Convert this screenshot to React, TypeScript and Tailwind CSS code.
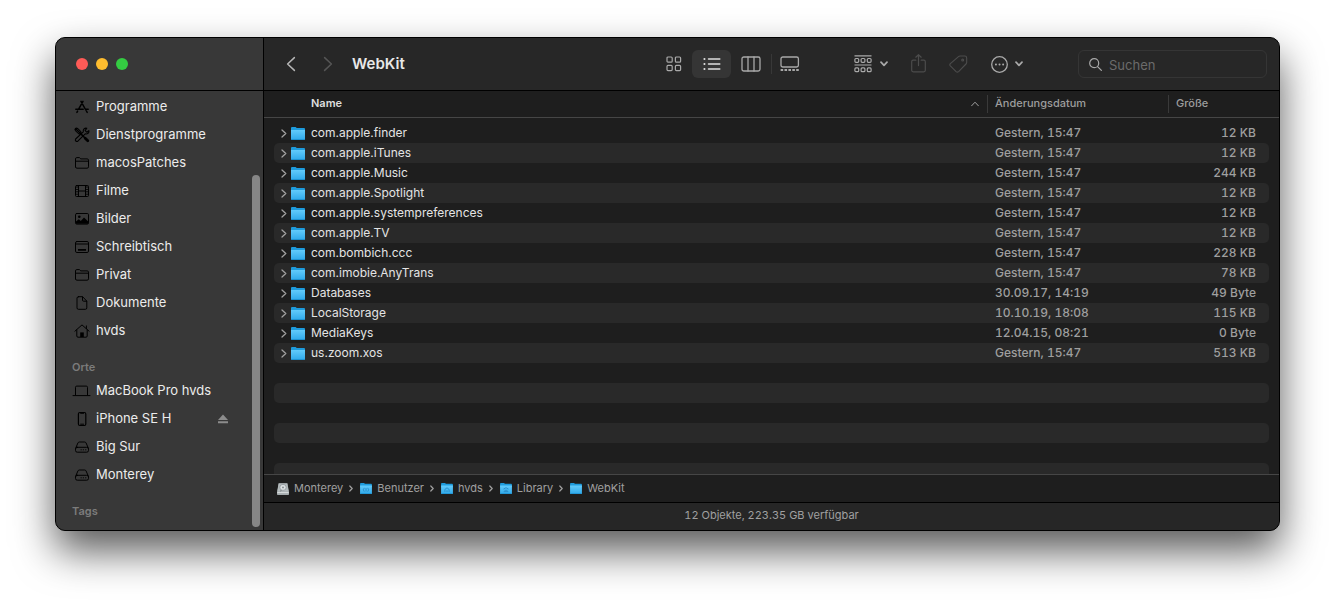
import type { ReactNode } from "react";
import clsx from "clsx";

type IconProps = { className?: string };

type SidebarItem = {
  label: string;
  icon: (props: IconProps) => ReactNode;
  ejectable?: boolean;
};

type FileRow = {
  name: string;
  date: string;
  size: string;
};

/* ---------- sidebar icons ---------- */

const line = {
  fill: "none",
  stroke: "currentColor",
  strokeLinecap: "round",
  strokeLinejoin: "round",
} as const;

const AppsIcon = ({ className }: IconProps) => (
  <svg viewBox="0 0 16 16" className={className} {...line} strokeWidth="1.5">
    <path d="M7 2.3 11.8 11M9 2.3 4.6 10.2M1.8 10.2h7.4M11.4 10.2h2.8M3.6 12.1l-.7 1.3M12.4 12l.8 1.4" />
  </svg>
);

const ToolsIcon = ({ className }: IconProps) => (
  <svg viewBox="0 0 16 16" className={className} {...line}>
    <path d="M14.9 3.6 12.8 5.2l-1.7-1.6L12.8 1.2C10.6.6 8.8 2.6 9.3 4.8L1.6 12c-1 1.4.9 3.2 2.2 2.2L11.2 6.8c2.2.6 4.3-1 3.7-3.2Z" strokeWidth="1.1" />
    <path d="M2.5 2.5 5.7 5.7" strokeWidth="4" />
    <path d="m3.4 2.2 2.9 2.9M2.2 3.4l2.9 2.9" stroke="#383838" strokeWidth="0.6" />
    <path d="m6.4 6.4 4.8 4.8" strokeWidth="1.6" />
    <path d="m11.2 11.2 2.6 2.6" strokeWidth="2.8" />
  </svg>
);

const FolderIcon = ({ className }: IconProps) => (
  <svg viewBox="0 0 16 16" className={className} {...line}>
    <path d="M1.5 11.8V3.9q0-1.3 1.3-1.3h2.6l1.4 1.3h6.4q1.3 0 1.3 1.3v6.6q0 1.4-1.4 1.4H2.9q-1.4 0-1.4-1.4ZM1.5 6.2h13" />
  </svg>
);

const FilmIcon = ({ className }: IconProps) => (
  <svg viewBox="0 0 16 16" className={className} {...line}>
    <rect x="1.5" y="2.5" width="13" height="11" rx="1" />
    <path d="M4.5 2.5v11M11.5 2.5v11M4.5 8h7" />
    <path d="M3 3.5v9M13 3.5v9" strokeWidth="1.6" strokeDasharray="1 1.4" strokeLinecap="butt" />
  </svg>
);

const PictureIcon = ({ className }: IconProps) => (
  <svg viewBox="0 0 16 16" className={className} {...line}>
    <rect x="1.5" y="2.5" width="13" height="10.6" rx="1.2" />
    <circle cx="5.3" cy="5.8" r="1.3" fill="currentColor" stroke="none" />
    <path d="M2 12.8V10.6L4.8 8.3l2 1.6L10 6.6l4.2 3.8v2.4Z" fill="currentColor" stroke="none" />
  </svg>
);

const DesktopIcon = ({ className }: IconProps) => (
  <svg viewBox="0 0 16 16" className={className} {...line}>
    <rect x="1.5" y="2.5" width="13" height="11" rx="1.4" />
    <path d="M2 5h12" />
    <path d="M4 10h8v1.8H4Z" fill="currentColor" stroke="none" />
  </svg>
);

const DocumentIcon = ({ className }: IconProps) => (
  <svg viewBox="0 0 16 16" className={className} {...line}>
    <path d="M4.4 1.7h4.2l4.2 4.4v6.8q0 1.4-1.4 1.4h-7q-1.4 0-1.4-1.4V3.1q0-1.4 1.4-1.4ZM8.5 1.9v3.2q0 1.1 1.1 1.1h3" />
  </svg>
);

const HomeIcon = ({ className }: IconProps) => (
  <svg viewBox="0 0 16 16" className={className} {...line}>
    <path d="M.9 8.2 8 1.9l7.1 6.3M12.4 5.6V2.9M2.8 7v6q0 1.2 1.2 1.2h8q1.2 0 1.2-1.2V7" />
    <path d="M6.2 14V9.4h3.6V14Z" fill="currentColor" stroke="none" />
  </svg>
);

const LaptopIcon = ({ className }: IconProps) => (
  <svg viewBox="0 0 16 16" className={className} {...line}>
    <path d="M1.5 12V4.3q0-1.2 1.2-1.2h9.6q1.2 0 1.2 1.2V12M-1 12.6h17" />
  </svg>
);

const PhoneIcon = ({ className }: IconProps) => (
  <svg viewBox="0 0 16 16" className={className} {...line}>
    <rect x="4.4" y="1.5" width="7.4" height="13" rx="1.5" strokeWidth="1.2" />
    <path d="M6.6 2.3h3M6.6 13.2h3" />
  </svg>
);

const DriveIcon = ({ className }: IconProps) => (
  <svg viewBox="0 0 16 16" className={className} {...line}>
    <path d="M1.6 9.3 3.9 4Q4.3 3 5.4 3h5.2q1.1 0 1.5 1l2.3 5.3" />
    <rect x="1.5" y="8.3" width="13" height="4.9" rx="1.8" />
    <path d="M7 10.8h.3M9.2 10.8h.3M11.6 10.8h.3" />
  </svg>
);

const favorites: SidebarItem[] = [
  { label: "Programme", icon: AppsIcon },
  { label: "Dienstprogramme", icon: ToolsIcon },
  { label: "macosPatches", icon: FolderIcon },
  { label: "Filme", icon: FilmIcon },
  { label: "Bilder", icon: PictureIcon },
  { label: "Schreibtisch", icon: DesktopIcon },
  { label: "Privat", icon: FolderIcon },
  { label: "Dokumente", icon: DocumentIcon },
  { label: "hvds", icon: HomeIcon },
];

const locations: SidebarItem[] = [
  { label: "MacBook Pro hvds", icon: LaptopIcon },
  { label: "iPhone SE H", icon: PhoneIcon, ejectable: true },
  { label: "Big Sur", icon: DriveIcon },
  { label: "Monterey", icon: DriveIcon },
];

const files: FileRow[] = [
  { name: "com.apple.finder", date: "Gestern, 15:47", size: "12 KB" },
  { name: "com.apple.iTunes", date: "Gestern, 15:47", size: "12 KB" },
  { name: "com.apple.Music", date: "Gestern, 15:47", size: "244 KB" },
  { name: "com.apple.Spotlight", date: "Gestern, 15:47", size: "12 KB" },
  { name: "com.apple.systempreferences", date: "Gestern, 15:47", size: "12 KB" },
  { name: "com.apple.TV", date: "Gestern, 15:47", size: "12 KB" },
  { name: "com.bombich.ccc", date: "Gestern, 15:47", size: "228 KB" },
  { name: "com.imobie.AnyTrans", date: "Gestern, 15:47", size: "78 KB" },
  { name: "Databases", date: "30.09.17, 14:19", size: "49 Byte" },
  { name: "LocalStorage", date: "10.10.19, 18:08", size: "115 KB" },
  { name: "MediaKeys", date: "12.04.15, 08:21", size: "0 Byte" },
  { name: "us.zoom.xos", date: "Gestern, 15:47", size: "513 KB" },
];

// empty striped rows below the files
const fillerRows = [0, 1, 2, 3, 4, 5];

const path = [
  { label: "Monterey", kind: "drive" },
  { label: "Benutzer", kind: "users" },
  { label: "hvds", kind: "home" },
  { label: "Library", kind: "library" },
  { label: "WebKit", kind: "folder" },
];

/* ---------- small drawings ---------- */

const BlueFolder = ({ kind = "folder", className }: { kind?: string; className?: string }) => (
  <svg viewBox="0 0 14 13" className={className}>
    <defs>
      <linearGradient id="folder-front" x1="0" y1="0" x2="0" y2="1">
        <stop offset="0" stopColor="#62cbfb" />
        <stop offset="1" stopColor="#2fa9ea" />
      </linearGradient>
    </defs>
    <path d="M0 1Q0 0 1 0h3.6l1.2 1H13q1 0 1 1v3H0Z" fill="#1e9bdc" />
    <path d="M0 3h14v9q0 1-1 1H1q-1 0-1-1Z" fill="url(#folder-front)" />
    <path d="M.5 12.5h13" stroke="#1f93d3" />
    {kind === "users" && (
      <path d="M5 5.8a3 3 0 0 0 0 4.4M9 5.8a3 3 0 0 1 0 4.4M7 6v4" stroke="#2787c4" fill="none" />
    )}
    {kind === "home" && <path d="M4.5 10.5V7.6L7 5.7l2.5 1.9v2.9M7 8.6v2" stroke="#2787c4" fill="none" />}
    {kind === "library" && <path d="M4 7.2 7 5.6l3 1.6M4.3 10.2h5.4M5.2 8.6h3.6" stroke="#2787c4" fill="none" />}
  </svg>
);

const SilverDrive = ({ className }: IconProps) => (
  <svg viewBox="0 0 12 12" className={className}>
    <path d="M1.6.2h8.8L12 9v2.2q0 .8-.8.8H.8q-.8 0-.8-.8V9Z" fill="#a4abad" />
    <path d="M1.8.5h8.4l1.4 8H.4Z" fill="#b4bbbd" />
    <ellipse cx="6" cy="4.4" rx="3.2" ry="3" fill="#dde2e3" stroke="#858d90" strokeWidth=".7" />
    <circle cx="6" cy="4.4" r=".9" fill="#7d8588" />
    <path d="m4.6 7.4-1.6.8" stroke="#6c7477" strokeWidth=".8" />
    <path d="M.3 9.6h11.4" stroke="#e8ebec" strokeWidth=".8" />
  </svg>
);

const DownChevron = () => (
  <svg viewBox="0 0 8 6" className="h-[6px] w-2" {...line} strokeWidth="1.7">
    <path d="M1 1.2 4 4.4 7 1.2" />
  </svg>
);

/* ---------- sidebar ---------- */

const SidebarList = ({ items }: { items: SidebarItem[] }) => (
  <ul>
    {items.map(({ label, icon: Icon, ejectable }) => (
      <li key={label} className="flex h-7 items-center pr-[35px] pl-[18px]">
        <a href="#" className="flex flex-1 items-center gap-[6px] whitespace-nowrap">
          <Icon className="size-4 shrink-0 overflow-visible text-black" />
          {label}
        </a>
        {ejectable && (
          <button type="button" aria-label="Auswerfen" className="text-[#8c8c8c]">
            <svg viewBox="0 0 10 10" className="size-[10px]" fill="currentColor">
              <path d="M5 0.4 10 6H0ZM0 7.2h10v2H0Z" />
            </svg>
          </button>
        )}
      </li>
    ))}
  </ul>
);

const SidebarHeading = ({ children }: { children: ReactNode }) => (
  <h2 className="mt-[13px] pl-4 text-[11px] leading-[19px] font-semibold text-[#7c7c7c]">{children}</h2>
);

const Sidebar = () => (
  <aside className="flex w-[208px] shrink-0 flex-col border-r border-black bg-[#383838]">
    <div className="flex h-[53px] shrink-0 items-center gap-2 border-b border-black pl-5">
      <button type="button" aria-label="Schließen" className="size-3 rounded-full bg-[#ff5b57]" />
      <button type="button" aria-label="Minimieren" className="size-3 rounded-full bg-[#ffbd2f]" />
      <button type="button" aria-label="Vergrößern" className="size-3 rounded-full bg-[#34cc42]" />
    </div>
    <nav className="relative min-h-0 flex-1 overflow-hidden pt-[2px] text-[13px] text-[#ececec]">
      <SidebarList items={favorites} />
      <SidebarHeading>Orte</SidebarHeading>
      <SidebarList items={locations} />
      <SidebarHeading>Tags</SidebarHeading>
      <div className="absolute top-[84px] right-[3px] bottom-[3px] w-2 rounded-full bg-[#868686]" />
    </nav>
  </aside>
);

/* ---------- toolbar ---------- */

const Toolbar = () => (
  <header className="flex h-[53px] shrink-0 items-center border-b border-black bg-[#272727] pr-3 pl-[22px] text-[#a9a9a9]">
    <div className="flex items-center gap-[27px]">
      <button type="button" aria-label="Zurück" className="text-[#b5b5b5]">
        <svg viewBox="0 0 10 16" className="h-4 w-[10px]" {...line} strokeWidth="1.5">
          <path d="M8.4 1.6 1.6 8l6.8 6.4" />
        </svg>
      </button>
      <button type="button" aria-label="Vorwärts" className="text-[#555555]">
        <svg viewBox="0 0 10 16" className="h-4 w-[10px]" {...line} strokeWidth="1.5">
          <path d="M1.6 1.6 8.4 8l-6.8 6.4" />
        </svg>
      </button>
    </div>
    <h1 className="ml-[19px] text-[15px] font-semibold text-[#e8e8e8]">WebKit</h1>

    <div className="ml-auto flex items-center">
      <button type="button" aria-label="Symbole" className="flex h-7 w-9 items-center justify-center">
        <svg viewBox="0 0 16 16" className="size-4" {...line} strokeWidth="1.2">
          <rect x="1" y="1" width="5.2" height="5.2" rx="1" />
          <rect x="9.4" y="1" width="5.2" height="5.2" rx="1" />
          <rect x="1" y="9.4" width="5.2" height="5.2" rx="1" />
          <rect x="9.4" y="9.4" width="5.2" height="5.2" rx="1" />
        </svg>
      </button>
      <button
        type="button"
        aria-label="Liste"
        aria-pressed="true"
        className="flex h-7 w-[39px] items-center justify-center rounded-md bg-[#353535] text-[#dedede]"
      >
        <svg viewBox="0 0 18 14" className="h-[14px] w-[18px]" {...line} strokeWidth="1.5">
          <path d="M5.5 2h11.3M5.5 7h11.3M5.5 12h11.3" />
          <path d="M1.4 2h.1M1.4 7h.1M1.4 12h.1" strokeWidth="2" />
        </svg>
      </button>
      <button type="button" aria-label="Spalten" className="flex h-7 w-10 items-center justify-center">
        <svg viewBox="0 0 20 16" className="h-4 w-5" {...line} strokeWidth="1.3">
          <rect x="1" y="1" width="18" height="14" rx="1.8" />
          <path d="M7 1v14M13 1v14" />
        </svg>
      </button>
      <div className="h-5 w-px bg-[#383838]" />
      <button type="button" aria-label="Galerie" className="flex h-7 w-9 items-center justify-center">
        <svg viewBox="0 0 20 16" className="h-4 w-5" {...line} strokeWidth="1.3">
          <rect x="1" y="1" width="17.4" height="10" rx="1.8" />
          <path d="M.6 14h18.2" strokeWidth="2" strokeDasharray="2.6 1.3" strokeLinecap="butt" />
        </svg>
      </button>
    </div>

    <div className="ml-[46px] flex items-center gap-[23px]">
      <button type="button" aria-label="Gruppieren" className="flex items-center gap-2">
        <svg viewBox="0 0 18 18" className="size-[18px]" {...line} strokeWidth="1.2">
          <path d="M0.5 .8h17M0.5 10h17" strokeLinecap="butt" />
          <rect x=".9" y="3.5" width="3.8" height="3.8" rx="1" />
          <rect x="7.1" y="3.5" width="3.8" height="3.8" rx="1" />
          <rect x="13.3" y="3.5" width="3.8" height="3.8" rx="1" />
          <rect x=".9" y="12.9" width="3.8" height="3.8" rx="1" />
          <rect x="7.1" y="12.9" width="3.8" height="3.8" rx="1" />
          <rect x="13.3" y="12.9" width="3.8" height="3.8" rx="1" />
        </svg>
        <DownChevron />
      </button>
      <button type="button" aria-label="Teilen" className="text-[#4c4c4c]">
        <svg viewBox="0 0 15 20" className="h-5 w-[15px]" {...line} strokeWidth="1.2">
          <path d="M4.8 6.2H2.2q-1.5 0-1.5 1.5v8.6q0 1.5 1.5 1.5h10.6q1.5 0 1.5-1.5V7.7q0-1.5-1.5-1.5h-2.6M7.5 11.6V.7M4.8 3.2 7.5.7l2.7 2.5" />
        </svg>
      </button>
      <button type="button" aria-label="Tags bearbeiten" className="text-[#4c4c4c]">
        <svg viewBox="0 0 20 20" className="h-5 w-[19px]" {...line} strokeWidth="1.2">
          <path d="M11.6 1.6h5q2 0 2 2v4.8q0 .9-.7 1.6l-7.8 8q-1.3 1.2-2.6 0L1.4 12q-1.1-1.2 0-2.4L10 2.2q.7-.6 1.6-.6Z" />
          <circle cx="14.4" cy="5.8" r="1" />
        </svg>
      </button>
      <button type="button" aria-label="Aktionen" className="flex items-center gap-[7px]">
        <svg viewBox="0 0 17 17" className="size-[17px]" {...line} strokeWidth="1.3">
          <circle cx="8.5" cy="8.5" r="7.8" />
          <path d="M4.9 8.5h.1M8.5 8.5h.1M12.1 8.5h.1" strokeWidth="1.9" />
        </svg>
        <DownChevron />
      </button>
    </div>

    <label className="ml-[55px] flex h-7 w-[189px] items-center gap-[7px] rounded-md border border-[#353535] pl-[10px]">
      <svg viewBox="0 0 13 13" className="size-[13px] shrink-0" {...line} strokeWidth="1.2">
        <circle cx="5.2" cy="5.2" r="4.5" />
        <path d="m8.6 8.6 3.8 3.8" />
      </svg>
      <input
        type="search"
        aria-label="Suchen"
        placeholder="Suchen"
        className="w-full min-w-0 bg-transparent pt-[3px] text-[13px] text-[#dedede] outline-none placeholder:text-[#6b6b6b]"
      />
    </label>
  </header>
);

/* ---------- file list ---------- */

const headCell = "h-[27px] border-b border-[#464646] p-0 text-left text-[11px]";

const FileTable = () => (
  <div className="min-h-0 flex-1 overflow-hidden bg-[#1e1e1e]">
    <table className="w-full table-fixed border-separate border-spacing-0">
      <colgroup>
        <col className="w-[10px]" />
        <col />
        <col className="w-[181px]" />
        <col className="w-[101px]" />
        <col className="w-[10px]" />
      </colgroup>
      <thead>
        <tr>
          <td className={headCell} />
          <th scope="col" aria-sort="ascending" className={clsx(headCell, "font-semibold text-[#dedede]")}>
            <div className="flex h-[18px] items-center justify-between pr-2 pb-[2px] pl-[37px]">
              Name
              <svg viewBox="0 0 8 6" className="mt-[2px] h-[6px] w-2 text-[#a0a0a0]" {...line}>
                <path d="M.6 4.8 4 1.2l3.4 3.6" />
              </svg>
            </div>
          </th>
          <th scope="col" className={clsx(headCell, "font-medium text-[#9d9d9d]")}>
            <div className="flex h-[18px] items-center border-l border-[#3a3a3a] pb-[2px] pl-[7px]">Änderungsdatum</div>
          </th>
          <th scope="col" className={clsx(headCell, "font-medium text-[#9d9d9d]")}>
            <div className="flex h-[18px] items-center border-l border-[#3a3a3a] pb-[2px] pl-[7px]">Größe</div>
          </th>
          <td className={headCell} />
        </tr>
      </thead>
      <tbody className="text-[12px] leading-5 text-[#9f9f9f] before:block before:h-[5px] before:content-['']">
        {files.map((file, i) => {
          const bg = i % 2 === 1 && "bg-[#292929]";
          return (
            <tr key={file.name}>
              <td className="h-5 p-0" />
              <td className={clsx("h-5 rounded-l-[5px] p-0", bg)}>
                <div className="flex h-5 items-center pl-[7px]">
                  <button type="button" aria-label={`${file.name} öffnen`} className="w-[6px] text-[#a0a0a0]">
                    <svg viewBox="0 0 6 9" className="h-[9px] w-[6px]" {...line} strokeWidth="1.3">
                      <path d="M1 1l3.8 3.5L1 8" />
                    </svg>
                  </button>
                  <BlueFolder className="ml-1 h-[13px] w-[14px]" />
                  <span className="ml-[6px] text-[#e4e4e4]">{file.name}</span>
                </div>
              </td>
              <td className={clsx("h-5 py-0 pr-0 pl-2 font-medium tabular-nums", bg)}>{file.date}</td>
              <td className={clsx("h-5 rounded-r-[5px] py-0 pr-[13px] pl-0 text-right font-medium tabular-nums", bg)}>
                {file.size}
              </td>
              <td className="h-5 p-0" />
            </tr>
          );
        })}
        {fillerRows.map((i) => (
          <tr key={i}>
            <td className="h-5 p-0" />
            <td colSpan={3} className={clsx("h-5 rounded-[5px] p-0", i % 2 === 1 && "bg-[#292929]")} />
            <td className="h-5 p-0" />
          </tr>
        ))}
      </tbody>
    </table>
  </div>
);

const PathBar = () => (
  <nav
    aria-label="Pfad"
    className="flex h-[29px] shrink-0 items-center border-y border-t-[#464646] border-b-black bg-[#1e1e1e] pl-[13px] text-[11px] text-[#a0a0a0]"
  >
    {path.map((entry, i) => (
      <div key={entry.label} className="flex items-center">
        {i > 0 && (
          <svg viewBox="0 0 4 7" className="mr-[7px] ml-[6px] h-[7px] w-1" {...line} strokeWidth="1.2">
            <path d="M.8 1l2.4 2.5L.8 6" />
          </svg>
        )}
        <a href="#" className="flex items-center gap-[5px]">
          {entry.kind === "drive" ? (
            <SilverDrive className="size-3" />
          ) : (
            <BlueFolder kind={entry.kind} className="h-[11px] w-3" />
          )}
          {entry.label}
        </a>
      </div>
    ))}
  </nav>
);

export default function App() {
  return (
    <div className="flex h-screen flex-col bg-white px-[55px] pt-[37px] pb-[73px] font-['Inter','Liberation_Sans',sans-serif]">
      <div className="flex min-h-0 flex-1 overflow-hidden rounded-[10px] border border-black bg-[#1e1e1e] shadow-[0_20px_40px_rgba(0,0,0,0.65)]">
        <Sidebar />
        <main className="flex min-w-0 flex-1 flex-col">
          <Toolbar />
          <FileTable />
          <PathBar />
          <footer className="flex h-[27px] shrink-0 items-center justify-center bg-[#262626] pb-[2px] text-[11px] text-[#a0a0a0] tabular-nums">
            12 Objekte, 223.35 GB verfügbar
          </footer>
        </main>
      </div>
    </div>
  );
}
